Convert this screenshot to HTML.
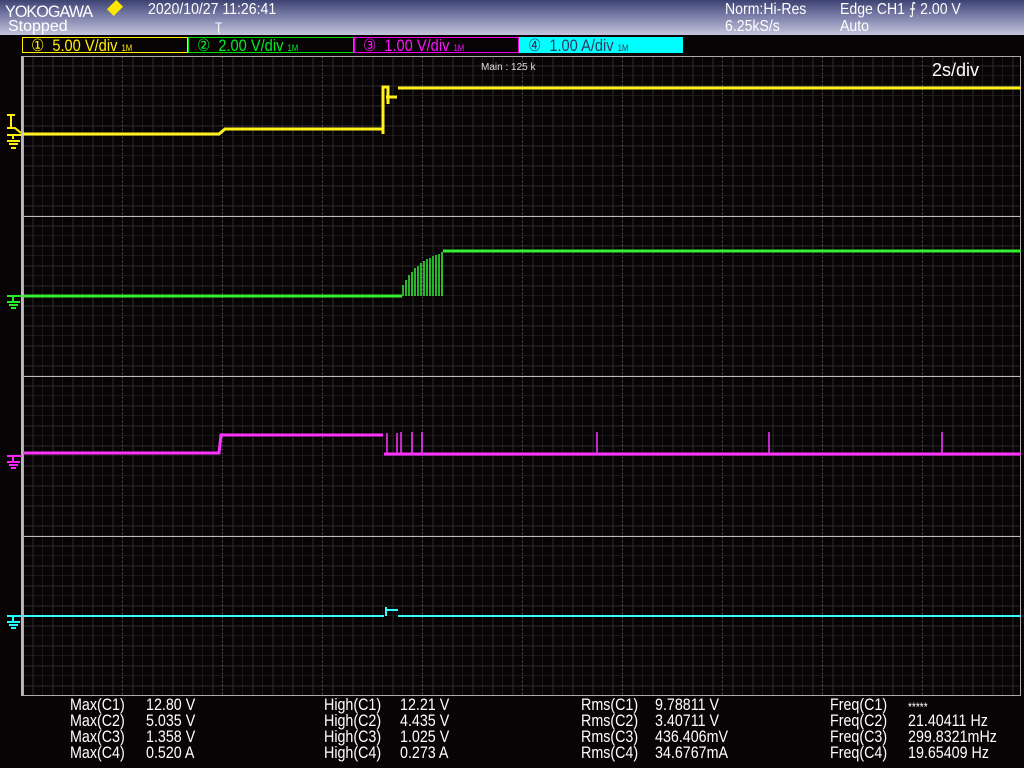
<!DOCTYPE html>
<html><head><meta charset="utf-8"><style>
body{margin:0;width:1024px;height:768px;background:#080406;overflow:hidden;position:relative;font-family:"Liberation Sans",sans-serif;}
.hdr{position:absolute;left:0;top:0;width:1024px;height:35px;background:linear-gradient(#3c4272 0%,#7a7ea8 45%,#c4c4dc 100%);}
.t{position:absolute;color:#fff;white-space:pre;line-height:1;}
.box{position:absolute;top:37px;height:16px;box-sizing:border-box;border:1px solid;}
.box span.in{position:absolute;left:0;top:-1px;font-size:17px;line-height:17px;white-space:pre;transform:scaleX(.86);transform-origin:0 0;}
.m{position:absolute;color:#fff;font-size:17px;line-height:16px;white-space:pre;transform:scaleX(.84);transform-origin:0 0;}
</style></head><body>
<div class="hdr"></div>
<div class="t" style="left:5px;top:3px;font-size:17px;letter-spacing:-1px;transform:scaleX(.95);transform-origin:0 0;">YOKOGAWA</div>
<div style="position:absolute;left:109px;top:2px;width:12px;height:12px;background:#ffe800;transform:rotate(45deg) scale(.8,1.1);"></div>
<div class="t" style="left:148px;top:2px;font-size:16px;transform:scaleX(.88);transform-origin:0 0;">2020/10/27 11:26:41</div>
<div class="t" style="left:8px;top:19px;font-size:16px;">Stopped</div>
<div class="t" style="left:215px;top:21px;font-size:12px;">Ţ</div>
<div class="t" style="left:725px;top:2px;font-size:16px;transform:scaleX(.88);transform-origin:0 0;">Norm:Hi-Res</div>
<div class="t" style="left:725px;top:19px;font-size:16px;transform:scaleX(.88);transform-origin:0 0;">6.25kS/s</div>
<div class="t" style="left:840px;top:2px;font-size:16px;transform:scaleX(.88);transform-origin:0 0;">Edge CH1 ⨍ 2.00 V</div>
<div class="t" style="left:840px;top:19px;font-size:16px;transform:scaleX(.88);transform-origin:0 0;">Auto</div>

<div class="box" style="left:22px;width:166px;border-color:#ffef00;color:#ffef00;"><span class="in">  ①  5.00 V/div <span style="font-size:9px">1M</span></span></div>
<div class="box" style="left:188px;width:166px;border-color:#00dd00;color:#00ee22;"><span class="in">  ②  2.00 V/div <span style="font-size:9px">1M</span></span></div>
<div class="box" style="left:354px;width:165px;border-color:#ee00ee;color:#ff10ff;"><span class="in">  ③  1.00 V/div <span style="font-size:9px">1M</span></span></div>
<div class="box" style="left:519px;width:164px;border-color:#00ffff;background:#00ffff;color:#303a60;"><span class="in">  ④  1.00 A/div <span style="font-size:9px">1M</span></span></div>

<svg width="1024" height="768" style="position:absolute;left:0;top:0">
<defs>
<pattern id="g" x="23" y="56" width="20" height="20" patternUnits="userSpaceOnUse">
<path d="M10 0V20M20 0V20M0 10H20M0 20H20" stroke="#2a2a2a" stroke-width="1" fill="none"/>
<path d="M0 20.5H20" stroke="#777" stroke-width="1" stroke-dasharray="1 9"/>
</pattern>
</defs>
<rect x="23" y="56" width="998" height="640" fill="url(#g)"/>
<g stroke="#666" stroke-dasharray="1 3">
<path d="M122.5 57V696M222.5 57V696M322.5 57V696M422.5 57V696M522.5 57V696M622.5 57V696M722.5 57V696M822.5 57V696M922.5 57V696"/>
</g>
<g stroke="#bbb" fill="none">
<path d="M23.5 216.5H1021M23.5 376.5H1021M23.5 536.5H1021"/>
<rect x="23.5" y="56.5" width="997" height="639" stroke="#aaa"/>
<path d="M22 56V696" stroke="#bbb" stroke-width="2"/>
</g>
<text x="481" y="70" fill="#ddd" font-size="10" font-family="Liberation Sans">Main : 125 k</text>
<text x="932" y="76" fill="#fff" font-size="18" font-family="Liberation Sans">2s/div</text>
<g stroke="#ffef1a" fill="none" stroke-width="3">
<path d="M23 134H219L225 129H383"/>
<path d="M383 134V87H388V104M386 97H397M398 88H1021"/>
</g>
<g stroke="#33ee33" fill="none">
<path d="M23 296H402" stroke-width="3"/>
<path d="M443 251H1021" stroke-width="3"/>
<path d="M403 296V285M406 296V280M409 296V275M412 296V272M415 296V268M418 296V266M421 296V263M424 296V261M427 296V259M430 296V258M433 296V256M436 296V255M439 296V254M442 296V252" stroke-width="1.5"/>
</g>
<g stroke="#ff33ff" fill="none">
<path d="M23 453H219L221 435H383" stroke-width="3"/>
<path d="M384 454H1021" stroke-width="3"/>
<path d="M387 454V433M397 454V433M401 454V432M412 454V432M422 454V432M597 454V432M769 454V432M942 454V432" stroke-width="1.5"/>
</g>
<g stroke="#33ffff" fill="none" stroke-width="2">
<path d="M23 616H384M386 616V607M386 610H398M398 616H1021"/>
</g>
<g fill="none" stroke-width="2">
<path d="M7 115H15M11 115V128M7 128H15L21 133" stroke="#ffef00"/>
<path d="M7 135H22M13 135V139M7 141H20M9 144H18M11 148H16" stroke="#ffef00"/>
<path d="M7 296H22M13 296V301M7 302H20M9 305H18M11 308H16" stroke="#22ee22"/>
<path d="M7 456H22M13 456V461M7 462H20M9 465H18M11 468H16" stroke="#ff22ff"/>
<path d="M7 616H22M13 616V621M7 622H20M9 625H18M11 628H16" stroke="#22ffff"/>
</g>
</svg>

<div class="m" style="left:70px;top:697px;">Max(C1)</div><div class="m" style="left:146px;top:697px;">12.80 V</div>
<div class="m" style="left:70px;top:713px;">Max(C2)</div><div class="m" style="left:146px;top:713px;">5.035 V</div>
<div class="m" style="left:70px;top:729px;">Max(C3)</div><div class="m" style="left:146px;top:729px;">1.358 V</div>
<div class="m" style="left:70px;top:745px;">Max(C4)</div><div class="m" style="left:146px;top:745px;">0.520 A</div>
<div class="m" style="left:324px;top:697px;">High(C1)</div><div class="m" style="left:400px;top:697px;">12.21 V</div>
<div class="m" style="left:324px;top:713px;">High(C2)</div><div class="m" style="left:400px;top:713px;">4.435 V</div>
<div class="m" style="left:324px;top:729px;">High(C3)</div><div class="m" style="left:400px;top:729px;">1.025 V</div>
<div class="m" style="left:324px;top:745px;">High(C4)</div><div class="m" style="left:400px;top:745px;">0.273 A</div>
<div class="m" style="left:581px;top:697px;">Rms(C1)</div><div class="m" style="left:655px;top:697px;">9.78811 V</div>
<div class="m" style="left:581px;top:713px;">Rms(C2)</div><div class="m" style="left:655px;top:713px;">3.40711 V</div>
<div class="m" style="left:581px;top:729px;">Rms(C3)</div><div class="m" style="left:655px;top:729px;">436.406mV</div>
<div class="m" style="left:581px;top:745px;">Rms(C4)</div><div class="m" style="left:655px;top:745px;">34.6767mA</div>
<div class="m" style="left:830px;top:697px;">Freq(C1)</div><div class="m" style="left:908px;top:699px;font-size:12px;">*****</div>
<div class="m" style="left:830px;top:713px;">Freq(C2)</div><div class="m" style="left:908px;top:713px;">21.40411 Hz</div>
<div class="m" style="left:830px;top:729px;">Freq(C3)</div><div class="m" style="left:908px;top:729px;">299.8321mHz</div>
<div class="m" style="left:830px;top:745px;">Freq(C4)</div><div class="m" style="left:908px;top:745px;">19.65409 Hz</div>
</body></html>
